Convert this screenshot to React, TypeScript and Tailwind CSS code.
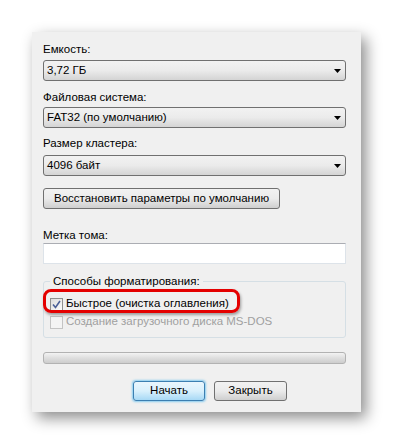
import React from 'react';

const font = { fontFamily: '"Liberation Sans", Arial, sans-serif' };

const Combo = ({ value }: { value: string }) => (
  <div className="flex h-[21px] items-center justify-between rounded-[3px] border border-[#707070] bg-gradient-to-b from-[#f2f2f2] via-[#ebebeb] to-[#d4d4d4] pl-[3px] pr-[4px] text-[11.5px] text-black">
    <span>{value}</span>
    <svg width="7" height="4" viewBox="0 0 7 4">
      <path d="M0 0 H7 L3.5 4 Z" fill="#000" />
    </svg>
  </div>
);

const Label = ({ text, className }: { text: string; className: string }) => (
  <div className={`h-[16px] text-[11.5px] leading-[16px] text-black ${className}`}>{text}</div>
);

const Checkbox = ({ checked, disabled }: { checked?: boolean; disabled?: boolean }) => (
  <div
    className={`flex h-[13px] w-[13px] shrink-0 items-center justify-center border ${
      disabled ? 'border-[#c4c4c4] bg-[#f4f4f4]' : 'border-[#8e8f8f] bg-gradient-to-br from-[#dcdcdc] to-[#fbfbfb]'
    }`}
  >
    {checked && (
      <svg width="9" height="9" viewBox="0 0 9 9">
        <path d="M1 4.5 L3.5 7.5 L8 1" stroke="#4a5f97" strokeWidth="1.6" fill="none" />
      </svg>
    )}
  </div>
);

export default function App() {
  return (
    <div className="h-[444px] w-[393px] bg-white pl-[32px] pt-[32px]" style={font}>
      <div className="h-[380px] w-[329px] bg-[#f0f0f0] pl-[11px] pr-[15px] pt-[9px] shadow-[5px_6px_14px_rgba(0,0,0,0.45)]">
        <Label text="Емкость:" className="" />
        <div className="mt-[3px]">
          <Combo value="3,72 ГБ" />
        </div>

        <Label text="Файловая система:" className="mt-[8px]" />
        <div className="mt-[2px]">
          <Combo value="FAT32 (по умолчанию)" />
        </div>

        <Label text="Размер кластера:" className="mt-[7px]" />
        <div className="mt-[4px]">
          <Combo value="4096 байт" />
        </div>

        <button className="mt-[12px] flex h-[21px] w-[237px] items-center justify-center whitespace-nowrap rounded-[3px] border border-[#707070] bg-gradient-to-b from-[#f2f2f2] via-[#ebebeb] to-[#cfcfcf] text-[11.5px] text-black">
          Восстановить параметры по умолчанию
        </button>

        <Label text="Метка тома:" className="mt-[18px]" />
        <div className="h-[21px] border border-[#dde3e9] border-t-[#abadb3] bg-white" />

        <fieldset className="mt-[9px] rounded-[3px] border border-[#d5dfe5] pb-[6px] pl-[6px]">
          <legend className="ml-[0px] px-[3px] text-[11.5px] leading-[16px] text-black">Способы форматирования:</legend>
          <div className="relative pt-[6px]">
            <div className="flex h-[18px] items-center gap-[3px] whitespace-nowrap text-[11.5px] text-black">
              <Checkbox checked />
              <span>Быстрое (очистка оглавления)</span>
            </div>
            <div className="flex h-[18px] items-center gap-[3px] whitespace-nowrap text-[11.5px] text-[#a0a0a0]">
              <Checkbox disabled />
              <span>Создание загрузочного диска MS-DOS</span>
            </div>
            <div className="absolute left-[-7px] top-0 h-[24px] w-[197px] rounded-[8px] border-[3px] border-[#e40000] shadow-[1px_2px_3px_rgba(0,0,0,0.35)]" />
          </div>
        </fieldset>

        <div className="mt-[14px] h-[12px] rounded-[3px] border border-[#b2b2b2] bg-gradient-to-b from-[#f3f3f3] via-[#dedede] to-[#cdcdcd]" />

        <div className="mt-[17px] flex gap-[9px] pl-[90px]">
          <button className="flex h-[20px] w-[72px] items-center justify-center rounded-[3px] border border-[#3c7fb1] bg-gradient-to-b from-[#eaf6fd] via-[#d9f0fc] to-[#a7d9f5] text-[11.5px] text-black shadow-[0_0_2px_1px_rgba(94,190,240,0.7)]">
            Начать
          </button>
          <button className="flex h-[20px] w-[73px] items-center justify-center rounded-[3px] border border-[#707070] bg-gradient-to-b from-[#f2f2f2] via-[#ebebeb] to-[#cfcfcf] text-[11.5px] text-black">
            Закрыть
          </button>
        </div>
      </div>
    </div>
  );
}
